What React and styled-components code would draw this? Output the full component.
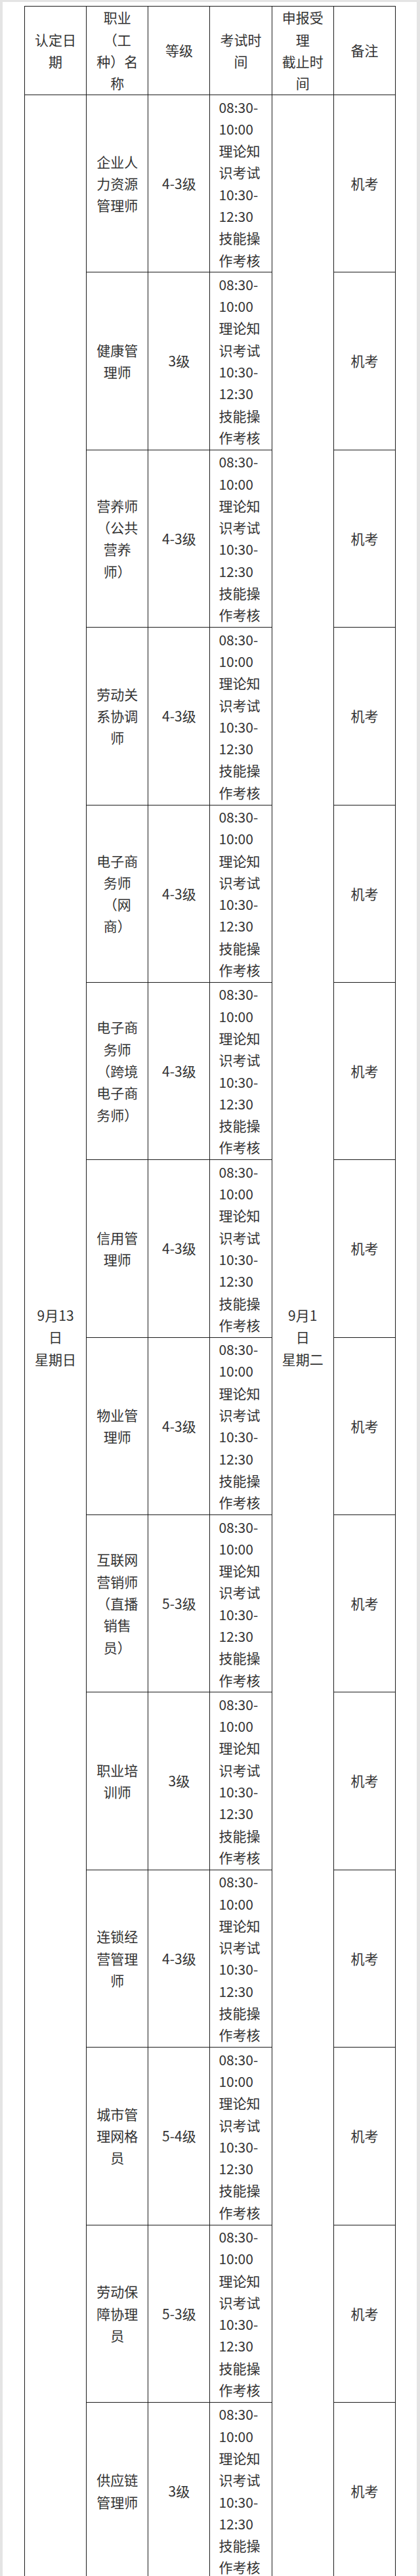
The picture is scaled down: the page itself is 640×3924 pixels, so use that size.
import styled, { createGlobalStyle } from "styled-components";

const GlobalStyle = createGlobalStyle`
  html, body {
    margin: 0;
    padding: 0;
    background: #e4e4e4;
  }
  body {
    font-family: "Noto Sans CJK SC", "Noto Sans", sans-serif;
    color: #333;
  }
`;

const Page = styled.div`
  margin: 3px 5px 0 4px;
  background: #fff;
  padding: 6px 0 0 33px;
  min-height: 3921px;
  box-sizing: border-box;
`;

const Table = styled.table`
  width: 566px;
  table-layout: fixed;
  border-collapse: collapse;
  font-size: 21px;
  line-height: 33.3px;
`;

const HeadCell = styled.th`
  border: 1px solid #1c1c1c;
  padding: 0;
  height: 134px;
  font-weight: normal;
  text-align: center;
  vertical-align: middle;
  white-space: nowrap;
`;

const Cell = styled.td`
  border: 1px solid #1c1c1c;
  padding: ${(p) => (p.$left ? "1.5px 0 1.5px 13px" : "1.5px 0")};
  text-align: ${(p) => (p.$left ? "left" : "center")};
  vertical-align: middle;
  white-space: nowrap;
`;

const Line = styled.div`
  display: block;
`;

const Lines = ({ items }) => items.map((t, i) => <Line key={i}>{t}</Line>);

const headers = [
  ["认定日", "期"],
  ["职业", "（工", "种）名", "称"],
  ["等级"],
  ["考试时", "间"],
  ["申报受", "理", "截止时", "间"],
  ["备注"],
];

const timeLines = [
  "08:30-",
  "10:00",
  "理论知",
  "识考试",
  "10:30-",
  "12:30",
  "技能操",
  "作考核",
];

const rows = [
  { name: ["企业人", "力资源", "管理师"], level: "4-3级" },
  { name: ["健康管", "理师"], level: "3级" },
  { name: ["营养师", "（公共", "营养", "师）"], level: "4-3级" },
  { name: ["劳动关", "系协调", "师"], level: "4-3级" },
  { name: ["电子商", "务师", "（网", "商）"], level: "4-3级" },
  { name: ["电子商", "务师", "（跨境", "电子商", "务师）"], level: "4-3级" },
  { name: ["信用管", "理师"], level: "4-3级" },
  { name: ["物业管", "理师"], level: "4-3级" },
  { name: ["互联网", "营销师", "（直播", "销售", "员）"], level: "5-3级" },
  { name: ["职业培", "训师"], level: "3级" },
  { name: ["连锁经", "营管理", "师"], level: "4-3级" },
  { name: ["城市管", "理网格", "员"], level: "5-4级" },
  { name: ["劳动保", "障协理", "员"], level: "5-3级" },
  { name: ["供应链", "管理师"], level: "3级" },
];

export default function App() {
  return (
    <>
      <GlobalStyle />
      <Page>
        <Table>
          <thead>
            <tr>
              {headers.map((h, i) => (
                <HeadCell key={i}>
                  <Lines items={h} />
                </HeadCell>
              ))}
            </tr>
          </thead>
          <tbody>
            {rows.map((r, i) => (
              <tr key={i}>
                {i === 0 && (
                  <Cell rowSpan={rows.length}>
                    <Lines items={["9月13", "日", "星期日"]} />
                  </Cell>
                )}
                <Cell>
                  <Lines items={r.name} />
                </Cell>
                <Cell>{r.level}</Cell>
                <Cell $left>
                  <Lines items={timeLines} />
                </Cell>
                {i === 0 && (
                  <Cell rowSpan={rows.length}>
                    <Lines items={["9月1", "日", "星期二"]} />
                  </Cell>
                )}
                <Cell>机考</Cell>
              </tr>
            ))}
          </tbody>
        </Table>
      </Page>
    </>
  );
}
